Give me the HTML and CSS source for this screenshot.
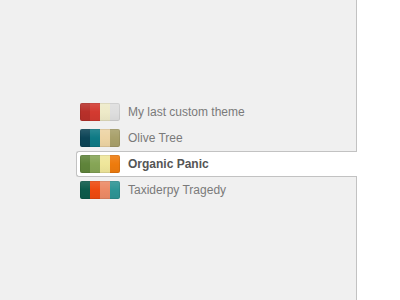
FILE: index.html
```html
<!DOCTYPE html>
<html>
<head>
<meta charset="utf-8">
<link rel="stylesheet" href="styles.css">
</head>
<body>
<div class="page">
  <div class="panel">
    <ul class="themes">
      <li class="theme">
        <span class="swatch"><i style="background:#b8302a"></i><i style="background:#d33a30"></i><i style="background:#eeeac8"></i><i style="background:#dedede"></i></span>
        <span class="name">My last custom theme</span>
      </li>
      <li class="theme">
        <span class="swatch"><i style="background:#0c4456"></i><i style="background:#0e7a85"></i><i style="background:#edd4a4"></i><i style="background:#a8a06a"></i></span>
        <span class="name">Olive Tree</span>
      </li>
      <li class="theme selected">
        <span class="swatch"><i style="background:#5f843a"></i><i style="background:#86a556"></i><i style="background:#efe69a"></i><i style="background:#ee7b0d"></i></span>
        <span class="name">Organic Panic</span>
      </li>
      <li class="theme">
        <span class="swatch"><i style="background:#0c5a4a"></i><i style="background:#ee4a0f"></i><i style="background:#ec8a66"></i><i style="background:#2d9494"></i></span>
        <span class="name">Taxiderpy Tragedy</span>
      </li>
    </ul>
  </div>
</div>
</body>
</html>
```
FILE: styles.css
```css
html, body {
  margin: 0;
  padding: 0;
  background: #ffffff;
}
.page {
  width: 400px;
  height: 300px;
  display: flex;
  overflow: hidden;
}
.panel {
  width: 356px;
  height: 300px;
  background: #f0f0f0;
  border-right: 1px solid #c2c2c2;
  padding-top: 99px;
  box-sizing: content-box;
}
.themes {
  list-style: none;
  margin: 0 -1px 0 76px;
  padding: 0;
}
.theme {
  height: 24px;
  display: flex;
  align-items: center;
  gap: 8px;
  padding-left: 3px;
  border: 1px solid transparent;
  border-right: none;
  font-family: "Liberation Sans", Arial, sans-serif;
  font-size: 12px;
  color: #7a7a7a;
}
.theme.selected {
  background: #ffffff;
  border-color: #c2c2c2;
  border-radius: 3px 0 0 3px;
  color: #555555;
  font-weight: bold;
}
.swatch {
  position: relative;
  display: flex;
  width: 40px;
  height: 18px;
  border-radius: 2px;
  overflow: hidden;
  flex: none;
}
.swatch i {
  flex: 1;
}
.swatch::after {
  content: "";
  position: absolute;
  inset: 0;
  border-radius: 2px;
  background: linear-gradient(to bottom, rgba(255,255,255,0.12), rgba(255,255,255,0) 50%, rgba(0,0,0,0.04));
  box-shadow: inset 0 0 0 1px rgba(0,0,0,0.08);
}
```
